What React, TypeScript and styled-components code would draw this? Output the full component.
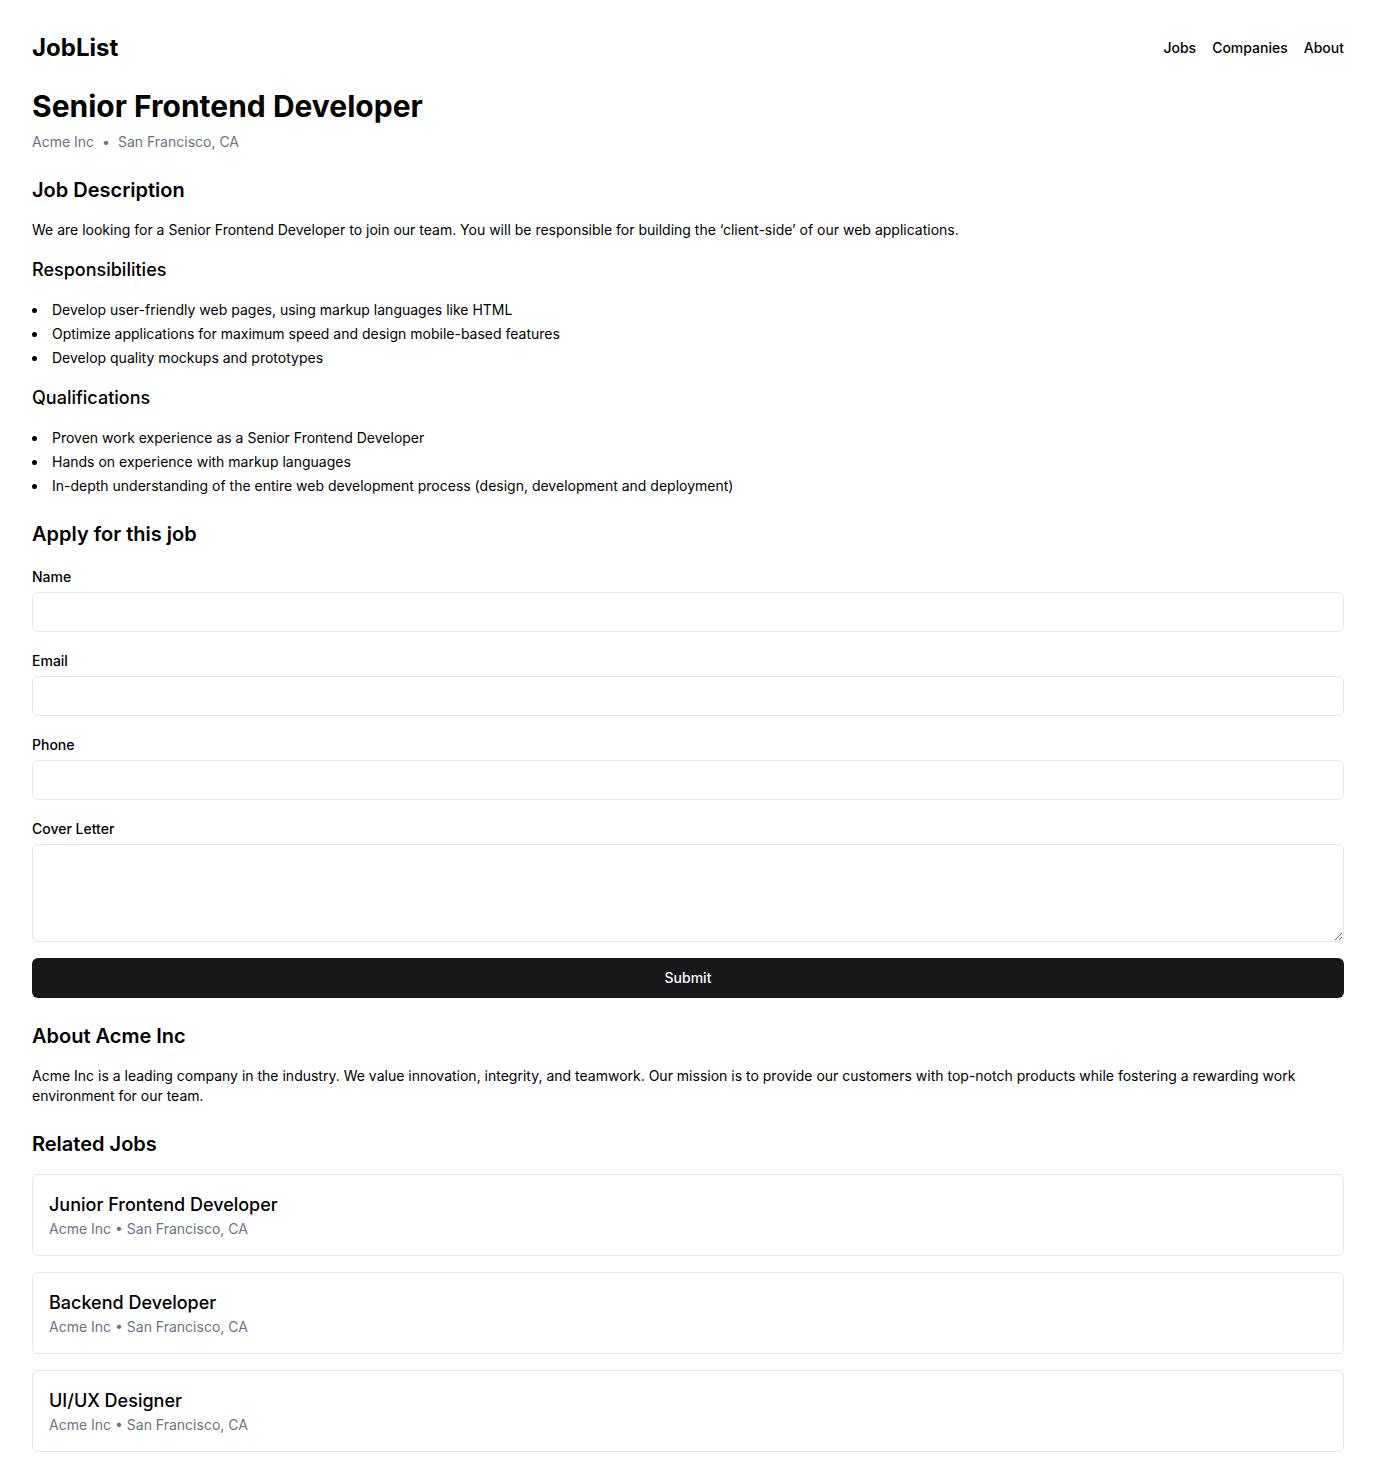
import React from "react";
import styled, { createGlobalStyle } from "styled-components";

const ink = "#000";
const muted = "#6b7280";
const line = "#e5e5e5";

const GlobalStyle = createGlobalStyle`
  *, *::before, *::after { box-sizing: border-box; }
  body {
    margin: 0;
    background: #fff;
    color: ${ink};
    font-family: Inter, "Liberation Sans", sans-serif;
    font-size: 14px;
    line-height: 20px;
  }
  h1, h2, h3, p, ul { margin: 0; padding: 0; }
  input, textarea, button { font: inherit; color: inherit; }
`;

const Page = styled.div`
  display: flex;
  flex-direction: column;
  gap: 24px;
  padding: 32px;
`;

const Header = styled.header`
  display: flex;
  align-items: center;
  justify-content: space-between;
`;

const Brand = styled.div`
  font-size: 24px;
  line-height: 32px;
  font-weight: 700;
`;

const Nav = styled.nav`
  display: flex;
  gap: 16px;
`;

const NavLink = styled.a`
  color: inherit;
  font-weight: 500;
  text-decoration: none;
`;

const Main = styled.main`
  display: flex;
  flex-direction: column;
  gap: 24px;
`;

const Section = styled.section<{ $gap?: number }>`
  display: flex;
  flex-direction: column;
  gap: ${({ $gap = 16 }) => $gap}px;
`;

const PageTitle = styled.h1`
  font-size: 30px;
  line-height: 36px;
  font-weight: 700;
`;

const Meta = styled.div`
  display: flex;
  gap: 8px;
  color: ${muted};
`;

const Heading = styled.h2`
  font-size: 20px;
  line-height: 28px;
  font-weight: 600;
`;

const Subheading = styled.h3`
  font-size: 18px;
  line-height: 28px;
  font-weight: 500;
`;

const List = styled.ul`
  display: flex;
  flex-direction: column;
  gap: 4px;
  list-style: disc inside;
`;

const Form = styled.form`
  display: flex;
  flex-direction: column;
  gap: 16px;
`;

const Field = styled.div`
  display: flex;
  flex-direction: column;
  gap: 2px;
`;

const Label = styled.label`
  font-weight: 500;
  line-height: 26px;
`;

const Input = styled.input`
  width: 100%;
  height: 40px;
  padding: 8px 12px;
  border: 1px solid ${line};
  border-radius: 6px;
  background: #fff;
`;

const TextArea = styled.textarea`
  display: block;
  width: 100%;
  height: 98px;
  padding: 8px 12px;
  border: 1px solid ${line};
  border-radius: 6px;
  background: #fff;
  resize: vertical;
`;

const SubmitButton = styled.button`
  height: 40px;
  border: 0;
  border-radius: 6px;
  background: #18181b;
  color: #fafafa;
  font-weight: 500;
  cursor: pointer;
`;

const Card = styled.article`
  padding: 16px;
  border: 1px solid ${line};
  border-radius: 6px;
`;

const CardMeta = styled.p`
  color: ${muted};
`;

const links = ["Jobs", "Companies", "About"];
const responsibilities = [
  "Develop user-friendly web pages, using markup languages like HTML",
  "Optimize applications for maximum speed and design mobile-based features",
  "Develop quality mockups and prototypes",
];
const qualifications = [
  "Proven work experience as a Senior Frontend Developer",
  "Hands on experience with markup languages",
  "In-depth understanding of the entire web development process (design, development and deployment)",
];
const fields = [
  { id: "name", label: "Name", type: "text" },
  { id: "email", label: "Email", type: "email" },
  { id: "phone", label: "Phone", type: "tel" },
];
const related = ["Junior Frontend Developer", "Backend Developer", "UI/UX Designer"];

function BulletList({ items }: { items: string[] }) {
  return (
    <List>
      {items.map((item) => (
        <li key={item}>{item}</li>
      ))}
    </List>
  );
}

export default function App() {
  return (
    <Page>
      <GlobalStyle />
      <Header>
        <Brand>JobList</Brand>
        <Nav>
          {links.map((link) => (
            <NavLink key={link} href="#">{link}</NavLink>
          ))}
        </Nav>
      </Header>
      <Main>
        <Section $gap={8}>
          <PageTitle>Senior Frontend Developer</PageTitle>
          <Meta>
            <span>Acme Inc</span>
            <span>•</span>
            <span>San Francisco, CA</span>
          </Meta>
        </Section>
        <Section>
          <Heading>Job Description</Heading>
          <p>
            We are looking for a Senior Frontend Developer to join our team. You will be responsible for
            building the ‘client-side’ of our web applications.
          </p>
          <Subheading>Responsibilities</Subheading>
          <BulletList items={responsibilities} />
          <Subheading>Qualifications</Subheading>
          <BulletList items={qualifications} />
        </Section>
        <Section>
          <Heading>Apply for this job</Heading>
          <Form onSubmit={(event) => event.preventDefault()}>
            {fields.map(({ id, label, type }) => (
              <Field key={id}>
                <Label htmlFor={id}>{label}</Label>
                <Input id={id} type={type} />
              </Field>
            ))}
            <Field>
              <Label htmlFor="cover-letter">Cover Letter</Label>
              <TextArea id="cover-letter" />
            </Field>
            <SubmitButton type="submit">Submit</SubmitButton>
          </Form>
        </Section>
        <Section>
          <Heading>About Acme Inc</Heading>
          <p>
            Acme Inc is a leading company in the industry. We value innovation, integrity, and teamwork. Our
            mission is to provide our customers with top-notch products while fostering a rewarding work
            environment for our team.
          </p>
        </Section>
        <Section>
          <Heading>Related Jobs</Heading>
          {related.map((title) => (
            <Card key={title}>
              <Subheading>{title}</Subheading>
              <CardMeta>Acme Inc • San Francisco, CA</CardMeta>
            </Card>
          ))}
        </Section>
      </Main>
    </Page>
  );
}
